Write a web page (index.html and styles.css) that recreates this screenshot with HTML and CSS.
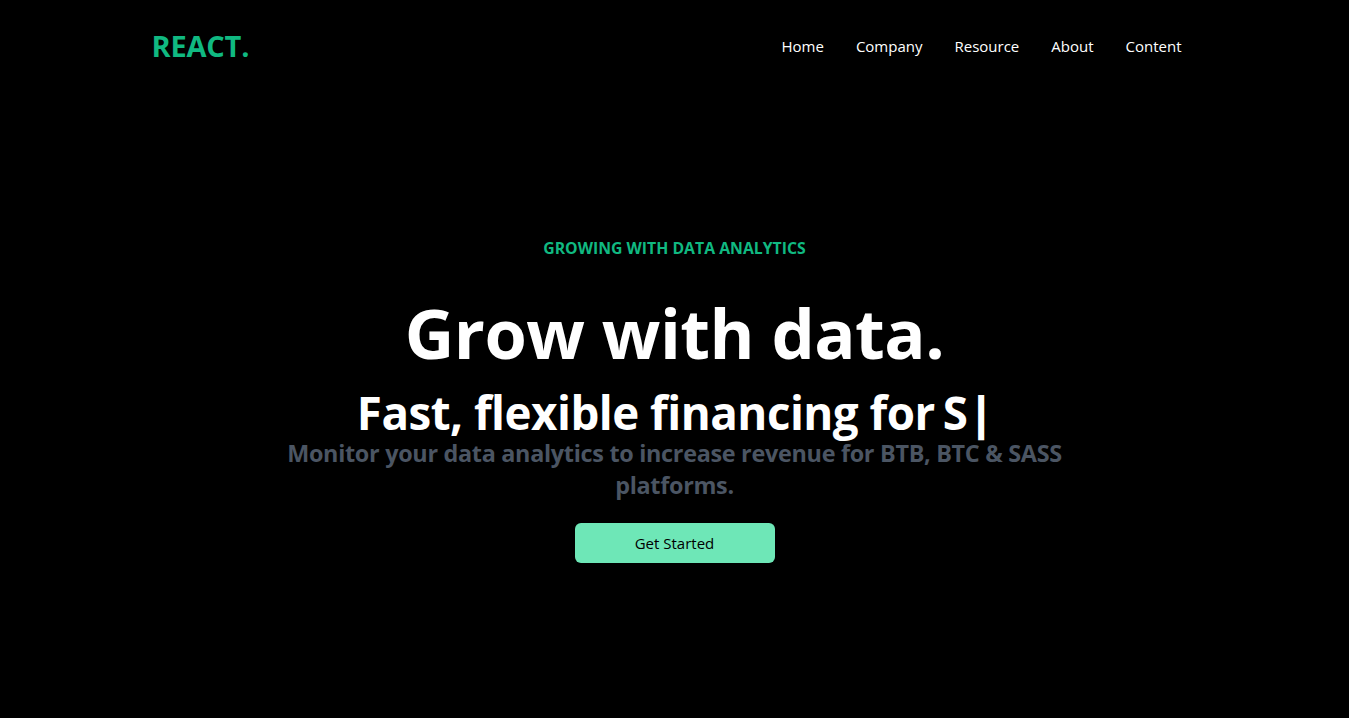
FILE: index.html
```html
<!DOCTYPE html>
<html lang="en">
<head>
<meta charset="utf-8">
<title>REACT.</title>
<link rel="stylesheet" href="styles.css">
</head>
<body>
<header class="nav">
  <h1 class="logo">REACT.</h1>
  <ul class="menu">
    <li>Home</li>
    <li>Company</li>
    <li>Resource</li>
    <li>About</li>
    <li>Content</li>
  </ul>
</header>
<main class="hero">
  <p class="eyebrow">GROWING WITH DATA ANALYTICS</p>
  <h2 class="title">Grow with data.</h2>
  <div class="typed">Fast, flexible financing for<span class="typed-word">S</span><span class="cursor">|</span></div>
  <p class="lead">Monitor your data analytics to increase revenue for BTB, BTC &amp; SASS platforms.</p>
  <button class="cta">Get Started</button>
</main>
</body>
</html>
```
FILE: styles.css
```css
* { box-sizing: border-box; }
html, body { margin: 0; padding: 0; }
body {
  background: #000;
  color: #fff;
  font-family: "Open Sans", "Noto Sans", sans-serif;
  height: 718px;
  overflow: hidden;
}
.nav {
  width: 1046px;
  height: 96px;
  margin: 0 auto;
  padding-bottom: 5px;
  display: flex;
  align-items: center;
  justify-content: space-between;
}
.logo {
  margin: 0;
  font-size: 29px;
  font-weight: 700;
  color: #10b981;
  letter-spacing: -0.2px;
}
.menu {
  list-style: none;
  margin: 0;
  padding: 0;
  display: flex;
}
.menu li {
  padding: 16px;
  font-size: 15px;
}
.hero {
  max-width: 800px;
  margin: 0 auto;
  padding-top: 140px;
  display: flex;
  flex-direction: column;
  align-items: center;
  text-align: center;
}
.eyebrow {
  margin: 0;
  font-size: 15.8px;
  line-height: 24px;
  font-weight: 700;
  color: #10b981;
}
.title {
  margin: 37px 0 0;
  font-size: 68.5px;
  line-height: 72px;
  font-weight: 700;
  letter-spacing: -0.5px;
}
.typed {
  margin-top: 19px;
  font-size: 45.7px;
  line-height: 48px;
  font-weight: 700;
  letter-spacing: -0.5px;
}
.typed-word { margin-left: 8px; }
.cursor { font-weight: 800; margin-left: 2px; }
.lead {
  margin: 1px 0 0;
  font-size: 23.4px;
  line-height: 32px;
  font-weight: 700;
  color: #4b5563;
  letter-spacing: -0.3px;
}
.cta {
  margin-top: 22px;
  width: 200px;
  height: 40px;
  border: 0;
  border-radius: 6px;
  background: #6ee7b7;
  color: #000;
  font-family: inherit;
  font-size: 15px;
  font-weight: 500;
}
```
